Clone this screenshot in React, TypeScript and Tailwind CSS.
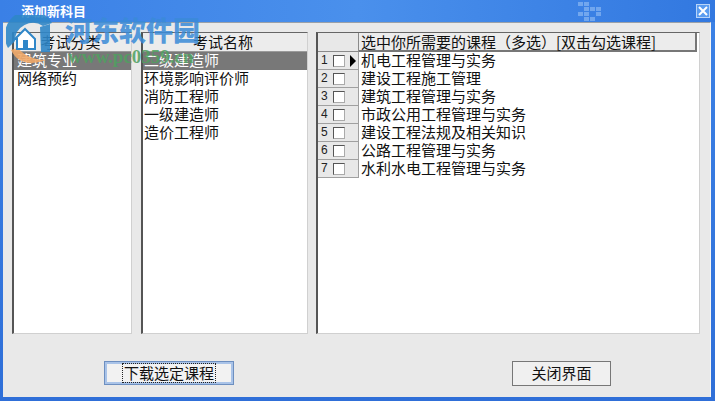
import React from "react";

const font = { fontFamily: '"Noto Sans CJK SC", "Liberation Sans", sans-serif' };

function ListPanel({ title, items, width, pad }: { title: string; items: string[]; width: string; pad: string }) {
  return (
    <div className={`${width} flex flex-col bg-white border-l-2 border-t border-l-[#555] border-t-[#666] border-r border-b border-r-[#d0d0d0] border-b-[#d0d0d0]`}>
      <div className="h-[19px] shrink-0 bg-[#ececec] border-b border-[#9a9a9a] pr-[4px] text-center text-[15px] leading-[17px] text-[#111]">{title}</div>
      {items.map((t, i) => (
        <div key={t} className={`h-[18px] ${pad} text-[15px] leading-[16px] whitespace-nowrap ${i === 0 ? "bg-[#787878] text-white" : "text-[#111]"}`}>{t}</div>
      ))}
    </div>
  );
}

const courses = ["机电工程管理与实务", "建设工程施工管理", "建筑工程管理与实务", "市政公用工程管理与实务", "建设工程法规及相关知识", "公路工程管理与实务", "水利水电工程管理与实务"];

function Grid() {
  return (
    <div className="flex-1 flex flex-col bg-white border-l-2 border-t border-l-[#555] border-t-[#666] border-r border-b border-r-[#d0d0d0] border-b-[#d0d0d0]">
      <div className="flex h-[19px] shrink-0">
        <div className="w-[41px] shrink-0 bg-[#e8e8e8] border-r border-b border-[#8a8a8a]" />
        <div className="w-[338px] shrink-0 bg-[#ececec] border-r-2 border-b-2 border-[#777] pl-[2px] text-[15px] leading-[17px] text-[#111] whitespace-nowrap">选中你所需要的课程（多选）[双击勾选课程]</div>
      </div>
      {courses.map((c, i) => (
        <div key={c} className="flex h-[18px] shrink-0">
          <div className="w-[41px] shrink-0 flex items-center bg-[#e8e8e8] border-r border-b border-[#a0a0a0]">
            <span className="w-[15px] pl-[3px] text-[12px] leading-[17px] text-[#222]" style={{ fontFamily: '"Liberation Sans", sans-serif' }}>{i + 1}</span>
            <span className="w-[12px] h-[12px] bg-white border border-t-[#555] border-l-[#555] border-r-[#aaa] border-b-[#aaa]" />
            {i === 0 && (
              <svg width="8" height="12" viewBox="0 0 8 12" className="ml-[4px]"><path d="M1 0 L7 6 L1 12 Z" fill="#000" /></svg>
            )}
          </div>
          <div className="pl-[2px] text-[15px] leading-[16px] text-[#111] whitespace-nowrap">{c}</div>
        </div>
      ))}
    </div>
  );
}

export default function App() {
  return (
    <div className="relative w-[715px] h-[401px] overflow-hidden flex flex-col bg-gradient-to-b from-[#3c82e6] to-[#2f6fd8]" style={font}>
      {/* title bar */}
      <div className="relative h-[22px] shrink-0 flex items-center justify-between bg-gradient-to-r from-[#3a80e6] via-[#4a90ec] to-[#3278e0] pl-[21px] pr-[5px]">
        <span className="text-[13px] font-bold text-white leading-[22px]">添加新科目</span>
        <div className="flex items-center gap-[95px]">
          <div className="grid grid-cols-4 gap-[1px] opacity-50">
            {[1,1,0,0, 0,1,1,1, 1,1,0,1, 0,1,1,0].map((v, i) => (
              <span key={i} className={`w-[5px] h-[4px] ${v ? "bg-[#a9cdf8]" : "bg-transparent"}`} />
            ))}
          </div>
          <div className="w-[14px] h-[14px] flex items-center justify-center bg-[#5a9cf0] border border-[#b8d4f8]">
            <svg width="10" height="10" viewBox="0 0 10 10"><path d="M1 1 L9 9 M9 1 L1 9" stroke="#fff" strokeWidth="2" /></svg>
          </div>
        </div>
      </div>

      {/* body */}
      <div className="flex-1 flex flex-col ml-[3px] mr-[4px] mb-[4px] bg-[#e9e9e9] border-r border-t border-r-[#f5f5f5] border-t-[#9aa0a8]">
        <div className="h-[302px] shrink-0 flex mt-[9px] ml-[9px] mr-[10px]">
          <ListPanel title="考试分类" items={["建筑专业", "网络预约"]} width="w-[120px] mr-[9px]" pad="pl-[3px]" />
          <ListPanel title="考试名称" items={["二级建造师", "环境影响评价师", "消防工程师", "一级建造师", "造价工程师"]} width="w-[167px] mr-[8px]" pad="pl-[1px]" />
          <Grid />
        </div>
        <div className="flex-1 flex items-start">
          <button className="ml-[102px] mt-[28px] w-[128px] h-[22px] flex items-center justify-center bg-[#f2f2f2] border-2 border-[#a9c3e8] outline outline-1 outline-[#6d8fc0] text-[15px] text-[#111]">
            <span className="border border-dotted border-[#222] leading-[18px] px-[1px]">下载选定课程</span>
          </button>
          <button className="ml-[279px] mt-[27px] w-[99px] h-[25px] flex items-center justify-center bg-[#f0f0f0] border border-[#777] text-[15px] text-[#111]">关闭界面</button>
        </div>
      </div>

      {/* watermark */}
      <div className="absolute left-[6px] top-[15px] flex items-start pointer-events-none">
        <svg width="54" height="50" viewBox="0 0 54 50" className="shrink-0">
          <path d="M2 33 A25 25 0 0 1 46 8 L37 11 A18 18 0 0 0 9 26 Z" fill="#2f86c8" opacity="0.9" />
          <path d="M5 35 Q14 54 40 45 Q22 45 12 33 Z" fill="#f0a868" opacity="0.9" />
          <path d="M9 24 L19 14 L29 24 L29 34 L11 34 L11 24 Z" fill="#fff" stroke="#2f86c8" strokeWidth="2" />
          <path d="M17 25 h5 v9 h-5 Z" fill="#2f86c8" />
          <path d="M34 12 L44 9 L44 37 L35 37 Z" fill="#2f86c8" opacity="0.9" />
        </svg>
        <div className="ml-[5px] flex flex-col">
          <span className="text-[27px] leading-[30px] font-black text-[#3a8bd8] opacity-85">河东软件园</span>
          <span className="ml-[3px] mt-[3px] text-[19px] leading-[18px] font-bold text-[#4fa060] opacity-85" style={{ fontFamily: '"Liberation Serif", serif' }}>www.pc0359.cn</span>
        </div>
      </div>
    </div>
  );
}
